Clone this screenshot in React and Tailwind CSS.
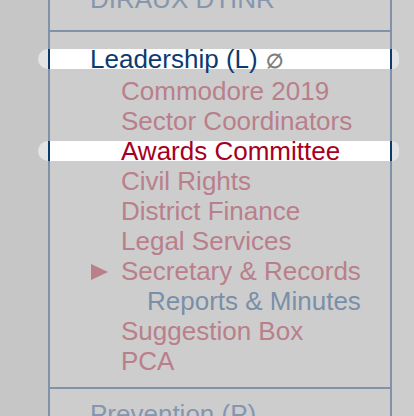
import React from "react";

const items = [
  { label: "Commodore 2019" },
  { label: "Sector Coordinators" },
  { label: "Awards Committee", active: true },
  { label: "Civil Rights" },
  { label: "District Finance" },
  { label: "Legal Services" },
  { label: "Secretary & Records", open: true },
  { label: "Reports & Minutes", sub: true },
  { label: "Suggestion Box" },
  { label: "PCA" },
];

function Highlight() {
  return (
    <div className="absolute left-[-12px] right-[-9px] top-[5px] h-[20px] flex">
      <div className="w-[10px] h-full rounded-l-full bg-[#e3e3e3]" />
      <div className="flex-1 h-full bg-white border-x-2 border-[#0b3a6e]" />
      <div className="w-[7px] h-full rounded-r-full bg-[#e3e3e3]" />
    </div>
  );
}

export default function App() {
  return (
    <div
      className="h-[416px] w-[414px] overflow-hidden flex bg-[#cdcdcd] text-[26px] leading-[30px]"
      style={{ fontFamily: '"Liberation Sans", Arial, sans-serif' }}
    >
      <div className="w-[48px] shrink-0 bg-[#c6c6c6]" />
      <div className="w-[344px] shrink-0 border-x-2 border-[#8192a8] flex flex-col mt-[-16px]">
        {/* DIRAUX section */}
        <div className="pl-[40px] pb-[16px] border-b-2 border-[#8192a8] text-[#8596ad] whitespace-nowrap">
          DIRAUX DTINR
        </div>

        {/* Leadership section */}
        <div className="pt-[12px] pb-[11px] border-b-2 border-[#8192a8]">
          <div className="relative h-[30px] mb-[2px]">
            <Highlight />
            <div className="relative pl-[40px] text-[#0b3a6e] flex items-baseline whitespace-nowrap">
              Leadership (L)
              <span className="ml-[8px] text-[20px] font-bold text-[#7f7f7f]">∅</span>
            </div>
          </div>
          {items.map((it) => (
            <div key={it.label} className="relative h-[30px]">
              {it.active && <Highlight />}
              {it.open && (
                <span className="absolute left-[41px] top-[8px] w-0 h-0 border-y-[8px] border-y-transparent border-l-[17px] border-l-[#b97f8b]" />
              )}
              <div
                className={
                  "relative whitespace-nowrap " +
                  (it.sub
                    ? "pl-[97px] text-[#7a8fa7]"
                    : it.active
                    ? "pl-[71px] text-[#a5001f]"
                    : "pl-[71px] text-[#b97f8b]")
                }
              >
                {it.label}
              </div>
            </div>
          ))}
        </div>

        {/* Prevention section */}
        <div className="pl-[40px] pt-[10px] text-[#8596ad] whitespace-nowrap">Prevention (P)</div>
      </div>
      <div className="flex-1" />
    </div>
  );
}
